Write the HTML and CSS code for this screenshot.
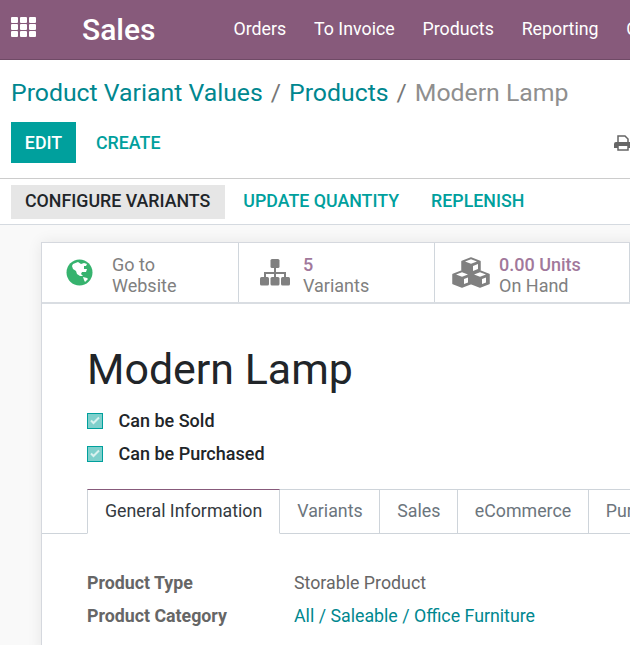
FILE: index.html
```html
<!DOCTYPE html>
<html lang="en">
<head>
    <meta charset="UTF-8">
    <meta name="viewport" content="width=device-width, initial-scale=1.0">
    <title>Modern Lamp</title>
    <link rel="stylesheet" href="styles.css">
</head>
<body>
    <header class="navbar">
        <svg class="apps-icon" width="25" height="20" viewBox="0 0 25 20">
            <g fill="#fff">
                <rect x="0" y="0" width="7" height="6" rx="1"/><rect x="9" y="0" width="7" height="6" rx="1"/><rect x="18" y="0" width="7" height="6" rx="1"/>
                <rect x="0" y="7" width="7" height="6" rx="1"/><rect x="9" y="7" width="7" height="6" rx="1"/><rect x="18" y="7" width="7" height="6" rx="1"/>
                <rect x="0" y="14" width="7" height="6" rx="1"/><rect x="9" y="14" width="7" height="6" rx="1"/><rect x="18" y="14" width="7" height="6" rx="1"/>
            </g>
        </svg>
        <span class="brand">Sales</span>
        <nav class="menu">
            <a>Orders</a>
            <a>To Invoice</a>
            <a>Products</a>
            <a>Reporting</a>
            <a>Configuration</a>
        </nav>
    </header>

    <div class="control-panel">
        <div class="breadcrumb">
            <a>Product Variant Values</a><span class="sep">/</span><a>Products</a><span class="sep">/</span><span class="current">Modern Lamp</span>
        </div>
        <div class="actions">
            <button class="btn-primary">EDIT</button>
            <button class="btn-link">CREATE</button>
            <svg class="print-icon" width="18" height="16" viewBox="0 0 18 16">
                <path fill="#fff" stroke="#666" stroke-width="1.500" d="M4 7V1h7l3 3v3M4 11v4h10v-4"/>
                <path fill="#666" d="M2 7h14a2 2 0 0 1 2 2v4h-4v-2H4v2H0V9a2 2 0 0 1 2-2z"/>
            </svg>
        </div>
    </div>

    <div class="statusbar">
        <button class="btn-status active">CONFIGURE VARIANTS</button>
        <button class="btn-status">UPDATE QUANTITY</button>
        <button class="btn-status">REPLENISH</button>
    </div>

    <main class="content">
        <div class="sheet">
            <div class="stat-row">
                <div class="stat stat-web">
                    <svg width="27" height="27" viewBox="0 0 27 27">
                        <circle cx="13.500" cy="13.500" r="13" fill="#36b36e"/>
                        <path fill="#fff" d="M7 5l5-2 3 2 3-1 3 1-1 2-2 0 0 3 3 0-1 3-4 0-1 2 2 2-3 0-3-2-1-3-3-2-1-3z"/>
                        <path fill="#fff" d="M17 18l4 1 1 1-3 3-1-2z"/>
                    </svg>
                    <div class="stat-text"><span>Go to</span><span>Website</span></div>
                </div>
                <div class="stat stat-variants">
                    <svg width="30" height="27" viewBox="0 0 30 27">
                        <g fill="#808080">
                            <rect x="10.500" y="0" width="9" height="9" rx="1.500"/>
                            <rect x="0" y="18" width="9" height="8.500" rx="1.500"/>
                            <rect x="10.500" y="18" width="9" height="8.500" rx="1.500"/>
                            <rect x="21" y="18" width="9" height="8.500" rx="1.500"/>
                            <path d="M14 9h2v4h10v5h-2v-3h-8v3h-2v-3H6v3H4v-5h10z"/>
                        </g>
                    </svg>
                    <div class="stat-text"><span class="stat-value">5</span><span>Variants</span></div>
                </div>
                <div class="stat stat-stock">
                    <svg width="38" height="31" viewBox="0 0 38 31">
                        <g fill="#808080" stroke="#808080" stroke-width="1.500" stroke-linejoin="round">
                            <path d="M19 1l9 3.500v8.500l-9 4-9-4V4.500z"/>
                            <path d="M10 14l9 3.500v9l-9 3.500-9-3.500v-9z"/>
                            <path d="M28 14l9 3.500v9l-9 3.500-9-3.500v-9z"/>
                        </g>
                        <path fill="#fff" d="M13 4.500l6-2.300 6 2.300-6 2.300zM4 17.500l6-2.300 6 2.300-6 2.300zM22 17.500l6-2.300 6 2.300-6 2.300z"/>
                        <path fill="#fff" d="M21 9l5-2v5l-5 2zM12 22l4-1.500v5l-4 1.500zM30 22l4-1.500v5l-4 1.500z"/>
                    </svg>
                    <div class="stat-text"><span class="stat-value">0.00 Units</span><span>On Hand</span></div>
                </div>
                <div class="stat stat-more"></div>
            </div>

            <h1 class="title">Modern Lamp</h1>

            <label class="check"><span class="check-box"><svg width="10" height="9" viewBox="0 0 10 9"><path d="M1 4.500l2.500 2.500L9 1.500" fill="none" stroke="#d9f1ef" stroke-width="2"/></svg></span>Can be Sold</label>
            <label class="check"><span class="check-box"><svg width="10" height="9" viewBox="0 0 10 9"><path d="M1 4.500l2.500 2.500L9 1.500" fill="none" stroke="#d9f1ef" stroke-width="2"/></svg></span>Can be Purchased</label>

            <ul class="tabs">
                <li class="tab active">General Information</li>
                <li class="tab">Variants</li>
                <li class="tab">Sales</li>
                <li class="tab">eCommerce</li>
                <li class="tab">Purchase</li>
            </ul>

            <div class="fields">
                <div class="field-label">Product Type</div>
                <div class="field-value">Storable Product</div>
                <div class="field-label">Product Category</div>
                <div class="field-value"><a>All / Saleable / Office Furniture</a></div>
            </div>
        </div>
    </main>
</body>
</html>
```

FILE: styles.css
```css
html, body {
    margin: 0;
    padding: 0;
    height: 645px;
    overflow: hidden;
}

body {
    width: 630px;
    font-family: Roboto, "Liberation Sans", sans-serif;
    background-color: #fff;
}

.navbar {
    display: flex;
    align-items: center;
    height: 59px;
    background-color: #875a7b;
    border-bottom: 1px solid #6f4a66;
    color: #fff;
    white-space: nowrap;
}

.apps-icon {
    margin: 0 0 5px 11px;
    flex: none;
}

.brand {
    margin-left: 46px;
    font-size: 30px;
    font-weight: 500;
}

.menu {
    display: flex;
    gap: 27.800px;
    margin: 0 0 2px 78px;
    font-size: 17.800px;
}

.control-panel {
    padding: 17px 11px 15px;
    border-bottom: 1px solid #ccc;
}

.breadcrumb {
    font-size: 24.800px;
    line-height: 31px;
    color: #00878f;
    white-space: nowrap;
}

.breadcrumb .sep {
    margin: 0 8px;
    color: #777;
}

.breadcrumb .current {
    color: #8f8f8f;
}

.actions {
    display: flex;
    align-items: center;
    margin-top: 14px;
}

button {
    font-family: inherit;
    border: none;
    background: none;
    cursor: pointer;
}

.btn-primary {
    width: 65px;
    height: 41px;
    padding: 0;
    background-color: #00a09d;
    color: #fff;
    font-size: 17.800px;
    font-weight: 500;
}

.btn-link {
    margin-left: 20px;
    padding: 0;
    color: #00a09d;
    font-size: 17.800px;
    font-weight: 500;
}

.print-icon {
    margin-left: auto;
    margin-right: -13px;
    flex: none;
}

.statusbar {
    display: flex;
    align-items: center;
    gap: 4px;
    height: 45px;
    padding: 0 11px;
    border-bottom: 1px solid #d5dae0;
}

.btn-status {
    height: 34px;
    padding: 0 14px 2px;
    color: #00a09d;
    font-size: 17.800px;
    font-weight: 500;
}

.btn-status.active {
    padding-right: 15px;
    background-color: #e6e6e6;
    color: #212529;
}

.content {
    height: 420px;
    padding: 17px 0 0 41px;
    background-color: #f9f9f9;
    overflow: hidden;
}

.sheet {
    width: 640px;
    height: 410px;
    background: #fff;
    border: 1px solid #d5d8de;
    box-shadow: 0 0 14px rgba(0, 0, 0, 0.08);
}

.stat-row {
    display: flex;
    height: 59px;
    border-bottom: 2px solid #d9dde2;
}

.stat {
    display: flex;
    align-items: center;
    flex: none;
    box-sizing: border-box;
    height: 59px;
    border-right: 1px solid #d0d6dc;
    font-size: 18px;
    line-height: 21px;
    color: #808080;
}

.stat-web {
    width: 197px;
    padding-left: 24px;
    gap: 19px;
}

.stat-variants {
    width: 196px;
    padding-left: 21px;
    gap: 13px;
}

.stat-stock {
    width: 195px;
    padding-left: 17px;
    gap: 9px;
}

.stat-more {
    width: 60px;
}

.stat-text {
    display: flex;
    flex-direction: column;
    padding-top: 4px;
    white-space: nowrap;
}

.stat-value {
    color: #a1789b;
    font-weight: 500;
}

.title {
    margin: 39px 0 0 45px;
    font-size: 42.900px;
    line-height: 53px;
    font-weight: 400;
    color: #212529;
}

.check {
    display: flex;
    align-items: center;
    margin: 0 0 0 45px;
    height: 33px;
    font-size: 18px;
    font-weight: 500;
    color: #212529;
}

.title + .check {
    margin-top: 8px;
}

.check-box {
    display: flex;
    align-items: center;
    justify-content: center;
    box-sizing: border-box;
    width: 16px;
    height: 16px;
    margin-right: 15.500px;
    background-color: #7fd0cc;
    border: 1px solid #00a09d;
}

.tabs {
    display: flex;
    margin: 19px 0 0;
    padding: 0 0 0 45px;
    list-style: none;
    border-bottom: 1px solid #ced4da;
    height: 44px;
}

.tab {
    box-sizing: border-box;
    height: 45px;
    padding: 0 16.500px 0 17px;
    line-height: 41px;
    font-size: 17.800px;
    color: #6c757d;
    border: 1px solid #ced4da;
    border-left: none;
    white-space: nowrap;
}

.tab.active {
    padding: 0 17px;
    color: #343a40;
    background: #fff;
    border-left: 1px solid #ced4da;
    border-top: 1px solid #875a7b;
    border-bottom: 1px solid #fff;
}

.fields {
    display: grid;
    grid-template-columns: 207px 1fr;
    grid-auto-rows: 33px;
    align-items: center;
    margin: 32px 0 0 45px;
    font-size: 17.800px;
}

.field-label {
    font-weight: 700;
    color: #666;
}

.field-value {
    color: #666;
}

.field-value a {
    color: #00878f;
}
```
